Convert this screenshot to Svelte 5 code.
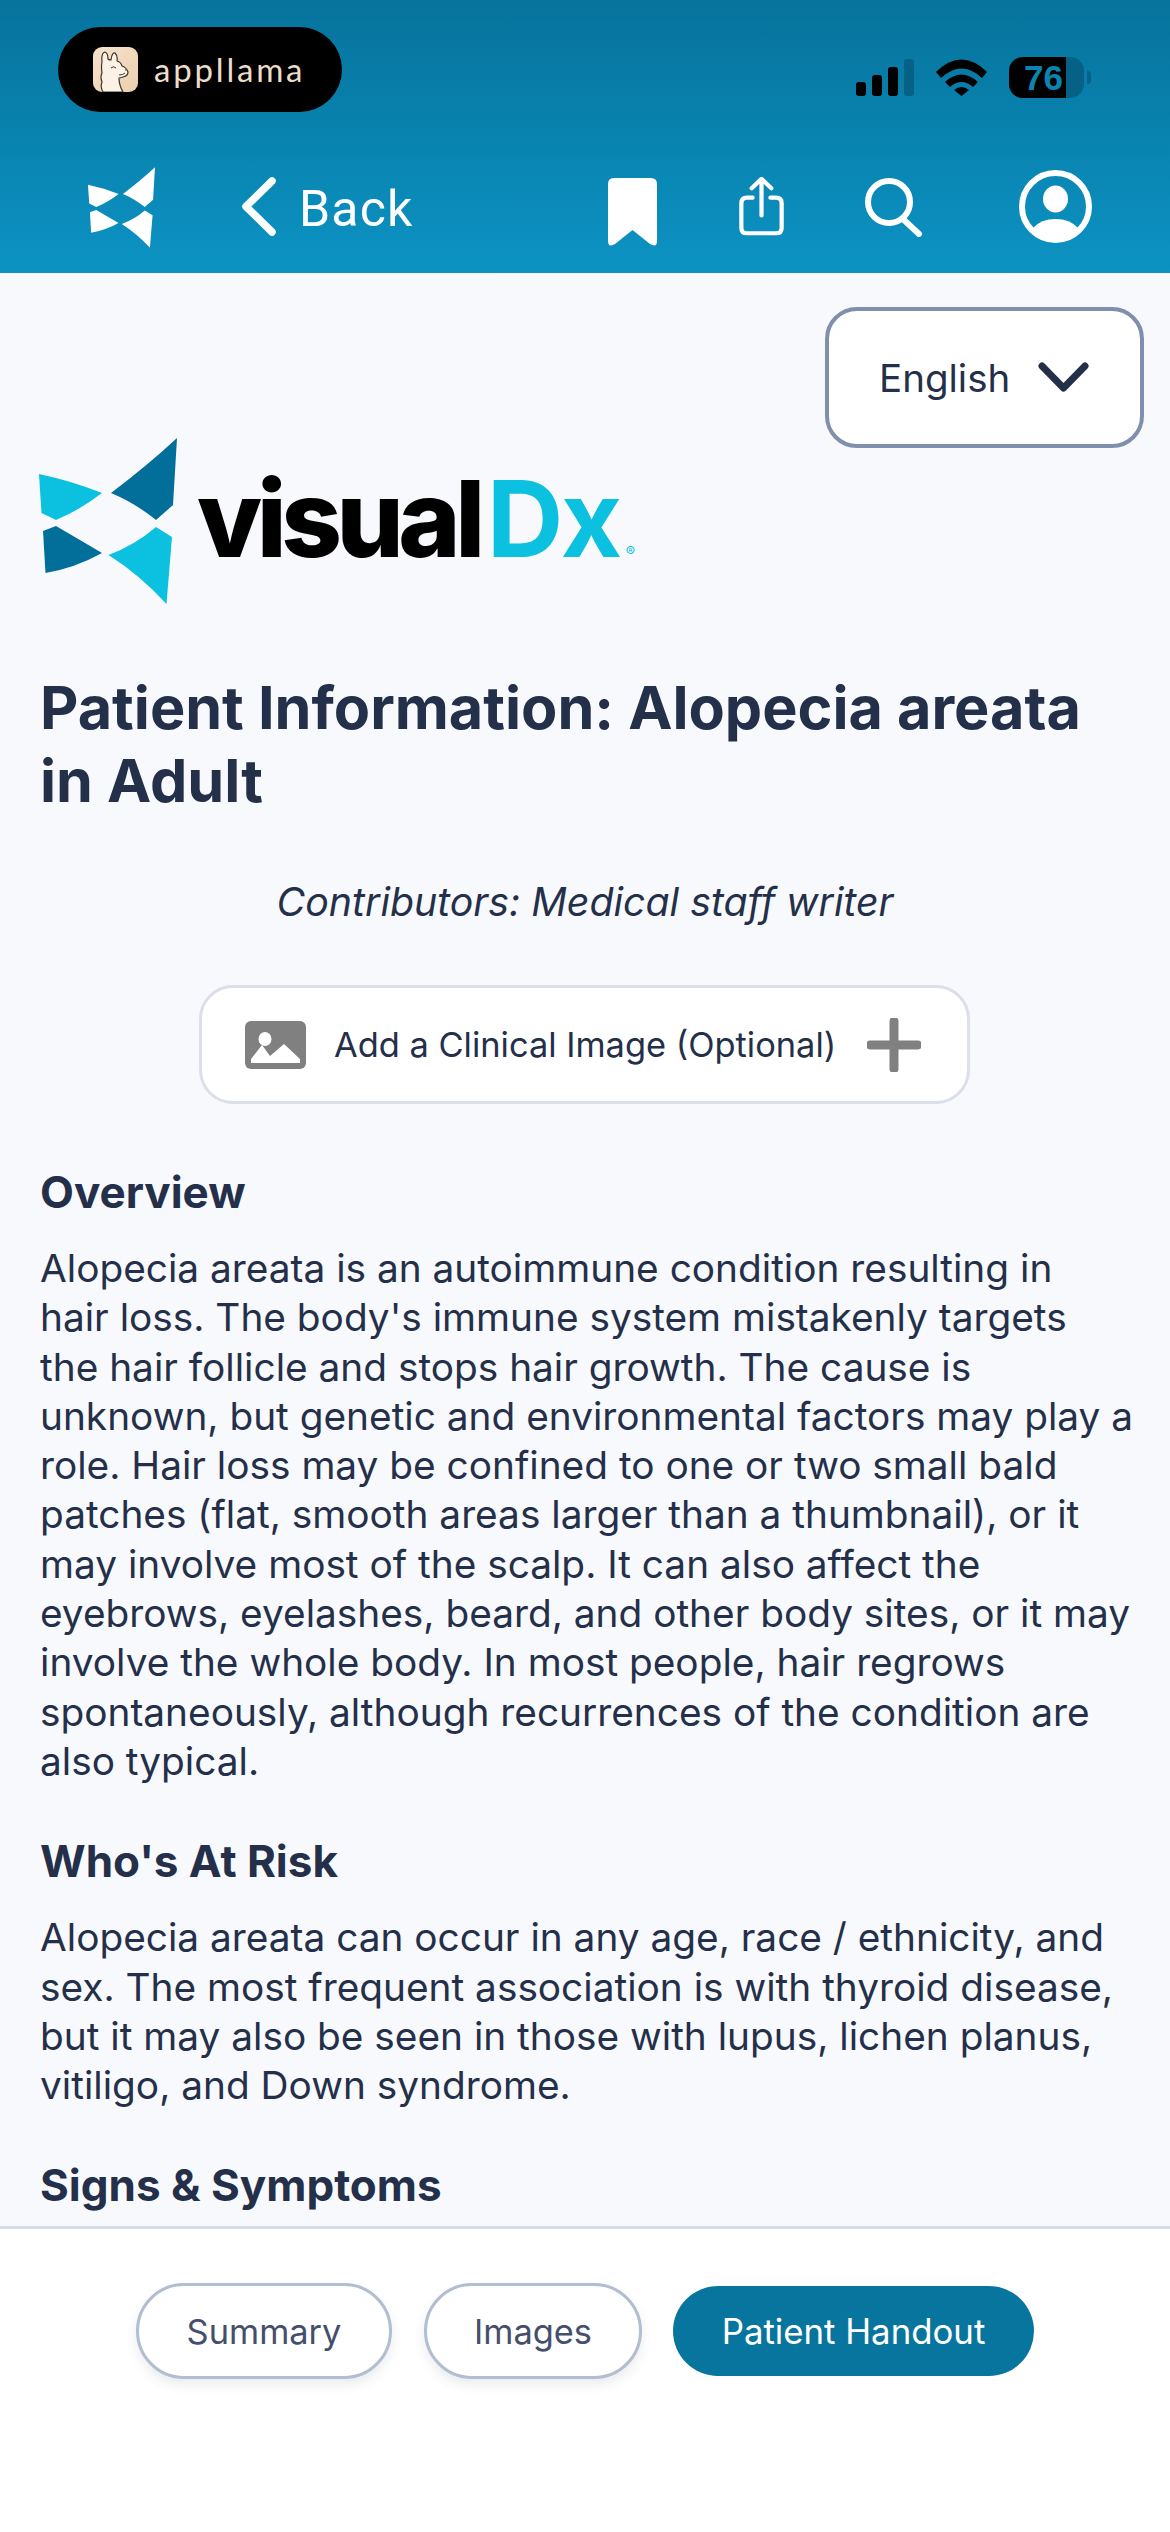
<script>
  const overview = ["Alopecia areata is an autoimmune condition resulting in","hair loss. The body's immune system mistakenly targets","the hair follicle and stops hair growth. The cause is","unknown, but genetic and environmental factors may play a","role. Hair loss may be confined to one or two small bald","patches (flat, smooth areas larger than a thumbnail), or it","may involve most of the scalp. It can also affect the","eyebrows, eyelashes, beard, and other body sites, or it may","involve the whole body. In most people, hair regrows","spontaneously, although recurrences of the condition are","also typical."];
  const risk = ["Alopecia areata can occur in any age, race / ethnicity, and","sex. The most frequent association is with thyroid disease,","but it may also be seen in those with lupus, lichen planus,","vitiligo, and Down syndrome."];
</script>

<svelte:head><title>VisualDx</title></svelte:head>

<svg width="0" height="0" class="defs">
  <symbol id="mark-a" viewBox="39 438 138 166">
    <path d="M39 474Q72 481 102 493Q80 510 56 520L41.500 513Z"/>
    <path d="M156 527L172 537L166.500 604Q140 575 108.500 555Q135 545 156 527Z"/>
  </symbol>
  <symbol id="mark-b" viewBox="39 438 138 166">
    <path d="M177 438L173 505L156 520Q135 503 111 493Q148 465 177 438Z"/>
    <path d="M43 531L56 526Q80 540 102 553Q75 568 45.500 573Z"/>
  </symbol>
</svg>

<div class="phone">
  <header class="top">
    <div class="status">
      <div class="pill">
        <svg class="llama" viewBox="0 0 45 45">
          <defs><linearGradient id="lg" x1="0" y1="0" x2="1" y2="1"><stop offset="0" stop-color="#f6e3cd"/><stop offset="1" stop-color="#eccfae"/></linearGradient></defs>
          <rect width="45" height="45" rx="9" fill="url(#lg)"/>
          <path d="M10 45Q7 40 9 35Q7 30 9 26Q8 20 9 15Q8 6 12 5Q15 6 15 12Q16 13 18 13Q19 5 22 6Q25 9 24 14Q28 15 29 19Q33 20 35 25Q35 29 30 30Q27 31 26 31Q26 38 30 45Z" fill="#fbf1e4" stroke="#3a3530" stroke-width="1.200" stroke-linejoin="round"/>
          <path d="M18 21Q20.500 18.500 23 21M26 28Q30 28 32 26M32 23L33.500 23" fill="none" stroke="#3a3530" stroke-width="1"/>
        </svg>
        <span class="brand">appllama</span>
      </div>
      <div class="sys">
        <div class="signal"><i class="b1"></i><i class="b2"></i><i class="b3"></i><i class="b4"></i></div>
        <svg class="wifi" viewBox="0 0 51 37">
          <path d="M0 13Q25.500-12 51 13L46 19Q25.500 0 5 19Z"/>
          <path d="M9 23Q25.500 8 42 23L37 28Q25.500 18 14 28Z"/>
          <path d="M18 31Q25.500 25 33 31L25.500 37Z"/>
        </svg>
        <div class="batt"><div class="cell"><div class="level"></div><span>76</span></div><div class="nub"></div></div>
      </div>
    </div>
    <nav class="nav">
      <div class="nav-left">
        <svg class="wlogo" viewBox="0 0 67 81"><use href="#mark-a" fill="#fff" width="67" height="81"/><use href="#mark-b" fill="#fff" width="67" height="81"/></svg>
        <svg class="chev" viewBox="0 0 36 61"><path d="M31 5L5 30.500L31 56" fill="none" stroke="#fff" stroke-width="7.500" stroke-linecap="round" stroke-linejoin="round"/></svg>
        <span class="back">Back</span>
      </div>
      <div class="nav-right">
        <svg class="i-book" viewBox="0 0 49 68"><path d="M0 6Q0 0 6 0H43Q49 0 49 6V63Q49 70 42 66L24.500 52L7 66Q0 70 0 63Z" fill="#fff"/></svg>
        <svg class="i-share" viewBox="0 0 47 64"><g fill="none" stroke="#fff" stroke-width="4.500" stroke-linecap="round" stroke-linejoin="round"><path d="M14 22H8Q2 22 2 28V54Q2 60 8 60H39Q45 60 45 54V28Q45 22 39 22H33"/><path d="M23.500 41V3M13 12L23.500 2L34 12"/></g></svg>
        <svg class="i-search" viewBox="0 0 58 59"><g fill="none" stroke="#fff" stroke-width="6" stroke-linecap="round"><ellipse cx="24" cy="24" rx="21" ry="21"/><path d="M39 42L54 56"/></g></svg>
        <svg class="i-user" viewBox="0 0 73 73"><circle cx="36.500" cy="36.500" r="33.500" fill="none" stroke="#fff" stroke-width="6"/><ellipse cx="36.500" cy="29" rx="12.500" ry="13.500" fill="#fff"/><path d="M14 58Q22 49 36.500 49Q51 49 59 58Q50 70 36.500 70Q23 70 14 58Z" fill="#fff"/></svg>
      </div>
    </nav>
  </header>

  <main class="content">
    <div class="lang-row">
      <div class="lang"><span>English</span>
        <svg class="lang-chev" viewBox="0 0 51 30"><path d="M4 4L25.500 26L47 4" fill="none" stroke="#243049" stroke-width="7" stroke-linecap="round" stroke-linejoin="round"/></svg>
      </div>
    </div>
    <div class="logo">
      <svg class="mark" viewBox="0 0 138 166"><use href="#mark-a" fill="#0cc1df" width="138" height="166"/><use href="#mark-b" fill="#016f9a" width="138" height="166"/></svg>
      <div class="word"><span class="vis">visual</span><span class="dx">Dx</span><span class="reg">®</span></div>
    </div>
    <h1>Patient Information: Alopecia areata<br>in Adult</h1>
    <p class="contrib">Contributors: Medical staff writer</p>
    <div class="add">
      <svg class="add-img" viewBox="0 0 61 48"><rect width="61" height="48" rx="6" fill="#808080"/><ellipse cx="20" cy="18" rx="6.500" ry="7" fill="#fff"/><path d="M6 42V38L17 24L25 35L39 23L55 38V42Z" fill="#fff"/></svg>
      <span>Add a Clinical Image (Optional)</span>
      <svg class="add-plus" viewBox="0 0 54 54"><path d="M27 3V51M3 27H51" stroke="#808080" stroke-width="9" stroke-linecap="round"/></svg>
    </div>
    <h2 class="first">Overview</h2>
    <p class="body">{#each overview as l}<span>{l}</span>{/each}</p>
    <h2>Who's At Risk</h2>
    <p class="body">{#each risk as l}<span>{l}</span>{/each}</p>
    <h2>Signs &amp; Symptoms</h2>
  </main>

  <footer class="foot">
    <div class="tab t-sum">Summary</div>
    <div class="tab t-img">Images</div>
    <div class="tab active">Patient Handout</div>
  </footer>
</div>

<style>
  :global(body) { margin: 0; background: #fff; }
  .defs { position: absolute; }
  .phone { width: 1170px; height: 2532px; display: flex; flex-direction: column; font-family: Inter, "Liberation Sans", sans-serif; color: #243049; overflow: hidden; }
  .top { height: 273px; flex: none; background: linear-gradient(180deg, #06739c 0%, #0c93c3 100%); display: flex; flex-direction: column; }
  .status { height: 139px; display: flex; justify-content: space-between; align-items: flex-start; padding: 27px 79px 0 58px; box-sizing: border-box; }
  .pill { width: 284px; height: 85px; border-radius: 43px; background: #000; display: flex; align-items: center; padding-left: 35px; box-sizing: border-box; gap: 16px; }
  .llama { width: 45px; height: 45px; }
  .brand { font-family: Lato, sans-serif; font-weight: 400; font-size: 33px; color: #ecdcc8; letter-spacing: 2.800px; line-height: 1; }
  .sys { display: flex; align-items: center; padding-top: 30px; }
  .signal { display: flex; gap: 6px; align-items: flex-end; height: 37px; }
  .signal i { width: 10px; border-radius: 3px; background: #000; display: block; }
  .b1 { height: 14px; } .b2 { height: 21px; } .b3 { height: 29px; }
  .signal .b4 { height: 37px; background: #056286; }
  .wifi { width: 51px; height: 37px; margin-left: 22px; }
  .batt { display: flex; align-items: center; margin-left: 22px; }
  .cell { width: 75px; height: 41px; border-radius: 14px; background: #056286; overflow: hidden; position: relative; font-family: "Liberation Sans", sans-serif; font-weight: 700; font-size: 35px; line-height: 41px; color: #0a84b0; }
  .level { position: absolute; left: 0; top: 0; bottom: 0; width: 57px; background: #000; }
  .cell span { position: absolute; left: 15px; top: 0; }
  .nub { width: 4px; height: 13px; margin-left: 3px; border-radius: 0 4px 4px 0; background: #056286; }
  .nav { flex: 1; display: flex; justify-content: space-between; position: relative; padding: 0 78px 0 88px; }
  .nav-left { display: flex; align-items: flex-start; }
  .wlogo { width: 67px; height: 81px; margin-top: 28px; }
  .chev { width: 36px; height: 61px; margin: 37px 0 0 86px; }
  .back { font-size: 50px; line-height: 60px; margin: 40px 0 0 22px; color: #fff; font-family: Roboto, sans-serif; letter-spacing: 1.200px; }
  .nav-right { display: flex; align-items: flex-start; }
  .i-book { width: 49px; height: 68px; margin-top: 39px; }
  .i-share { width: 47px; height: 60px; margin: 38px 0 0 81px; }
  .i-search { width: 58px; height: 59px; margin: 39px 0 0 80px; }
  .i-user { width: 73px; height: 73px; margin: 31px 0 0 96px; }
  .content { flex: 1; min-height: 0; overflow: hidden; background: #f8f9fd; padding: 0 40px; }
  .lang-row { display: flex; justify-content: flex-end; padding-top: 34px; margin-right: -14px; }
  .lang { width: 319px; height: 141px; box-sizing: border-box; border: 4px solid #7f8fac; border-radius: 32px; background: #fff; display: flex; align-items: center; padding-left: 50px; font-size: 38.500px; }
  .lang-chev { width: 51px; height: 30px; margin-left: 28px; margin-top: -2px; }
  .logo { display: flex; align-items: flex-start; margin-top: -10px; height: 166px; }
  .mark { width: 138px; height: 166px; flex: none; margin-left: -1px; }
  .word { display: flex; align-items: baseline; font-family: Inter, sans-serif; font-weight: 800; font-size: 106px; line-height: 140px; letter-spacing: -5.500px; margin: 11px 0 0 20px; color: #000; }
  .dx { color: #0cc1df; margin-left: 7px; font-weight: 700; letter-spacing: -2.500px; }
  .reg { color: #0cc1df; font-size: 14px; letter-spacing: 0; font-weight: 400; margin-left: 6px; }
  h1 { margin: 68px 0 0; font-size: 59.300px; line-height: 72.500px; font-weight: 700; }
  .contrib { margin: 62px 0 0; text-align: center; font-style: italic; font-size: 39.300px; line-height: 46px; }
  .add { width: 771px; height: 119px; box-sizing: border-box; margin: 60px 0 0 159px; background: #fff; border: 3px solid #dadfe9; border-radius: 34px; display: flex; align-items: center; padding-left: 43px; font-size: 34.400px; }
  .add-img { width: 61px; height: 48px; flex: none; margin-right: 28px; }
  .add-plus { width: 54px; height: 54px; flex: none; margin-left: 31px; }
  h2 { margin: 49px 0 0; font-size: 44px; line-height: 54px; font-weight: 700; }
  h2.first { margin-top: 61px; }
  .body { margin: 24px 0 0; font-size: 38.800px; line-height: 49.300px; }
  .body span { display: block; white-space: nowrap; }
  .foot { height: 306px; flex: none; box-sizing: border-box; border-top: 3px solid #d8dce6; background: #fff; display: flex; align-items: flex-start; padding: 54px 0 0 136px; }
  .tab { height: 96px; box-sizing: border-box; border: 3px solid #b1bdd0; border-radius: 48px; background: #fff; display: flex; align-items: center; justify-content: center; font-size: 34.400px; color: #454f6b; box-shadow: 0 6px 12px rgba(60, 70, 100, .1); }
  .t-sum { width: 256px; }
  .t-img { width: 218px; margin-left: 32px; }
  .tab.active { width: 361px; height: 90px; margin: 3px 0 0 31px; border: 0; background: #08759f; color: #fff; box-shadow: none; font-size: 34.800px; }
</style>
